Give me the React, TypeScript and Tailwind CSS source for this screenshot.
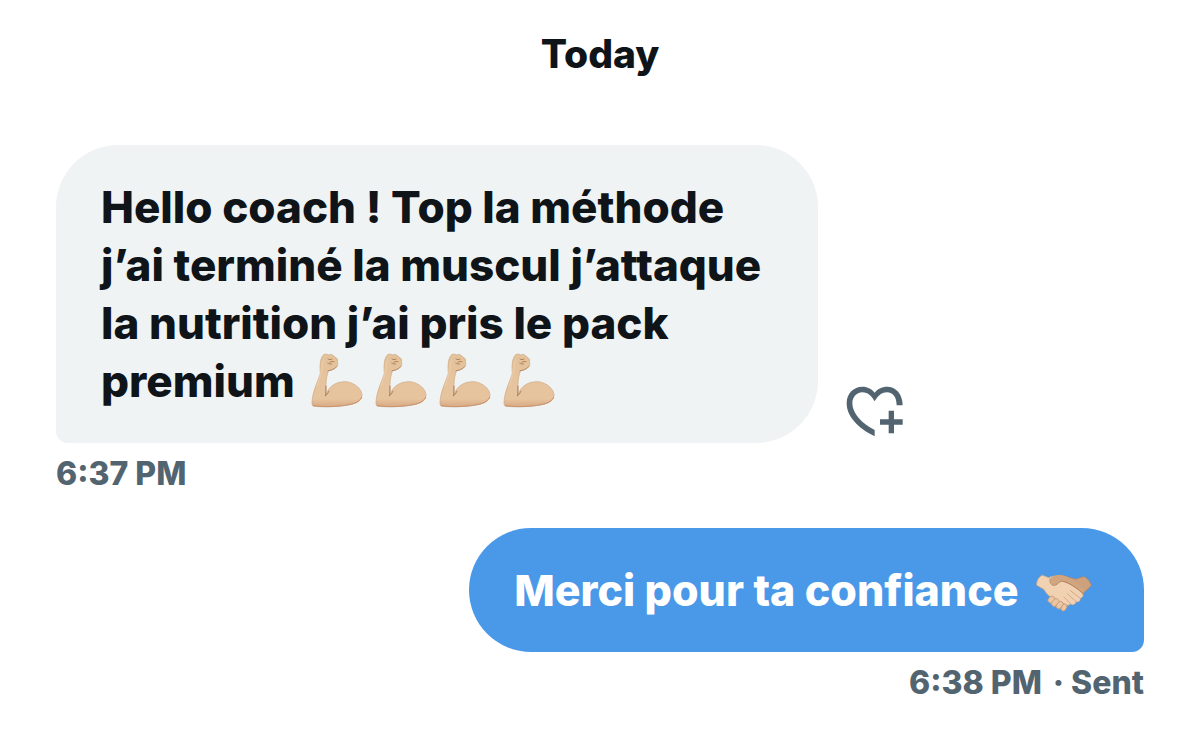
function FlexedArm() {
  return (
    <svg
      viewBox="32 36 156 165"
      className="mr-3 mb-0.5 h-[55px] w-[52px]"
      role="img"
      aria-label="Flexed biceps"
    >
      <defs>
        <linearGradient id="arm" x1="0" y1="0" x2="0" y2="1">
          <stop offset="0" stopColor="#e4c29c" />
          <stop offset="0.85" stopColor="#e6c49d" />
          <stop offset="1" stopColor="#d8a983" />
        </linearGradient>
      </defs>
      <path
        d="M66 46C70 39 78 37 84 42C90 38 100 41 103 48C110 50 114 57 111 63C115 71 110 79 103 82C97 86 91 88 84 90C80 103 77 116 77 130L77 160C86 134 110 121 136 122C164 124 186 146 185 164C184 182 162 190 142 192C110 198 66 199 38 195C33 190 35 178 38 162C44 136 54 116 60 98C58 76 59 58 66 46Z"
        fill="url(#arm)"
        stroke="#cfa57e"
        strokeWidth="2"
      />
      <path d="M38 194C70 199 118 197 146 191C166 187 181 179 184 168" fill="none" stroke="#c9936f" strokeWidth="3" />
      <path d="M77 134C76 146 78 156 75 165C80 161 83 157 86 150" fill="none" stroke="#ad7f5c" strokeWidth="3" />
      <path d="M83 89C93 88 103 85 109 77" fill="none" stroke="#b88963" strokeWidth="3" strokeLinecap="round" />
      <path d="M83 54C87 57 91 56 95 54M88 64C92 61 97 61 101 62M82 66C85 69 90 70 94 69" fill="none" stroke="#b0825c" strokeWidth="3" strokeLinecap="round" />
      <path d="M67 62C65 84 59 110 51 134" fill="none" stroke="#efd1ad" strokeWidth="6" strokeLinecap="round" opacity="0.5" />
    </svg>
  )
}

function Handshake() {
  return (
    <svg
      viewBox="49 44 168 113"
      className="ml-2 inline-block h-[38px] w-[56px] align-[-6px]"
      role="img"
      aria-label="Handshake"
    >
      <path
        d="M95 61C104 47 122 44 140 51L168 59C177 57 184 54 193 51C204 56 212 68 215 78C208 87 198 93 190 102L176 118L104 84Z"
        fill="#cda17b"
        stroke="#b58560"
        strokeWidth="2"
      />
      <path
        d="M51 77C50 64 58 51 68 47L88 55C94 51 101 48 107 51C112 57 125 64 140 69C156 77 176 88 189 101C192 109 188 115 181 116C184 124 177 129 169 126C168 135 160 138 152 133C149 139 142 138 137 135L104 118C88 112 79 101 73 90Z"
        fill="#f0d1b2"
        stroke="#d5a27c"
        strokeWidth="2"
      />
      <path
        d="M94 54C90 65 94 78 105 76C115 75 117 65 128 64C147 69 174 87 190 102L194 92C178 76 160 61 140 51C121 44 104 45 94 54Z"
        fill="#d0a57f"
      />
      <path
        d="M126 65C145 70 171 86 187 103C190 111 187 115 180 115C183 124 175 128 168 125C167 134 159 137 151 132L114 109L108 78C116 76 119 66 126 65Z"
        fill="#f0d1b2"
      />
      <path d="M92 57C88 69 95 80 106 77C116 74 118 65 128 65C147 69 175 87 190 103" fill="none" stroke="#a97856" strokeWidth="2.5" />
      <path d="M152 93L181 116M143 103L169 126M133 112L152 132" fill="none" stroke="#d9aa85" strokeWidth="3" strokeLinecap="round" />
      <g fill="#e9c6a5" stroke="#c99a76" strokeWidth="2.5">
        <rect x="84" y="112" width="22" height="17" rx="8" transform="rotate(-45 95 120)" />
        <rect x="94" y="121" width="25" height="17" rx="8" transform="rotate(-48 106 129)" />
        <rect x="108" y="129" width="24" height="16" rx="8" transform="rotate(-52 120 137)" />
        <rect x="122" y="137" width="22" height="14" rx="7" transform="rotate(-60 133 144)" />
      </g>
    </svg>
  )
}

function HeartPlus() {
  return (
    <svg viewBox="45 46 174 153" className="h-[51px] w-[58px]" fill="currentColor" aria-hidden="true">
      <path d="M131 197C95 180 47 145 47 98C47 68 68 48 94 48C110 48 123 55 131 66C139 55 152 48 168 48C195 48 215 70 215 104H197C197 80 186 65 168 65C150 65 140 78 131 92C122 78 112 65 94 65C76 65 64 80 64 98C64 130 95 160 131 178Z" />
      <path d="M173 120H189V146H215V162H189V188H173V162H147V146H173Z" />
    </svg>
  )
}

export default function App() {
  return (
    <main className="flex flex-col bg-white px-14 pt-6 pb-8 font-['Inter',sans-serif] font-extrabold text-[#0f1419]">
      <h1 className="text-center text-[39px] leading-[60px]">Today</h1>

      <section className="mt-[61px] flex flex-col items-start">
        <div className="flex w-full items-end gap-7">
          <p className="w-[70%] rounded-[62px] rounded-bl-[12px] bg-[#eff3f4] py-[33px] pl-[45px] text-[44px] leading-[58px] whitespace-nowrap">
            Hello coach ! Top la méthode
            <br />
            j’ai terminé la muscul j’attaque
            <br />
            la nutrition j’ai pris le pack
            <br />
            <span className="flex h-[58px] items-center">
              <span className="mr-4">premium</span>
              <FlexedArm />
              <FlexedArm />
              <FlexedArm />
              <FlexedArm />
            </span>
          </p>
          <button type="button" aria-label="Add reaction" className="mb-1.5 text-[#536471]">
            <HeartPlus />
          </button>
        </div>
        <time className="mt-[9px] text-[32px] leading-[44px] text-[#536471]">6:37 PM</time>
      </section>

      <section className="mt-8 flex flex-col items-end">
        <p className="rounded-[62px] rounded-br-[12px] bg-[#4a99e9] py-[33px] pr-[52px] pl-[45px] text-[43px] leading-[58px] whitespace-nowrap text-white">
          Merci pour ta confiance <Handshake />
        </p>
        <p className="mt-[9px] text-[32px] leading-[44px] text-[#536471]">
          <time className="mr-1">6:38 PM</time> · Sent
        </p>
      </section>
    </main>
  )
}
